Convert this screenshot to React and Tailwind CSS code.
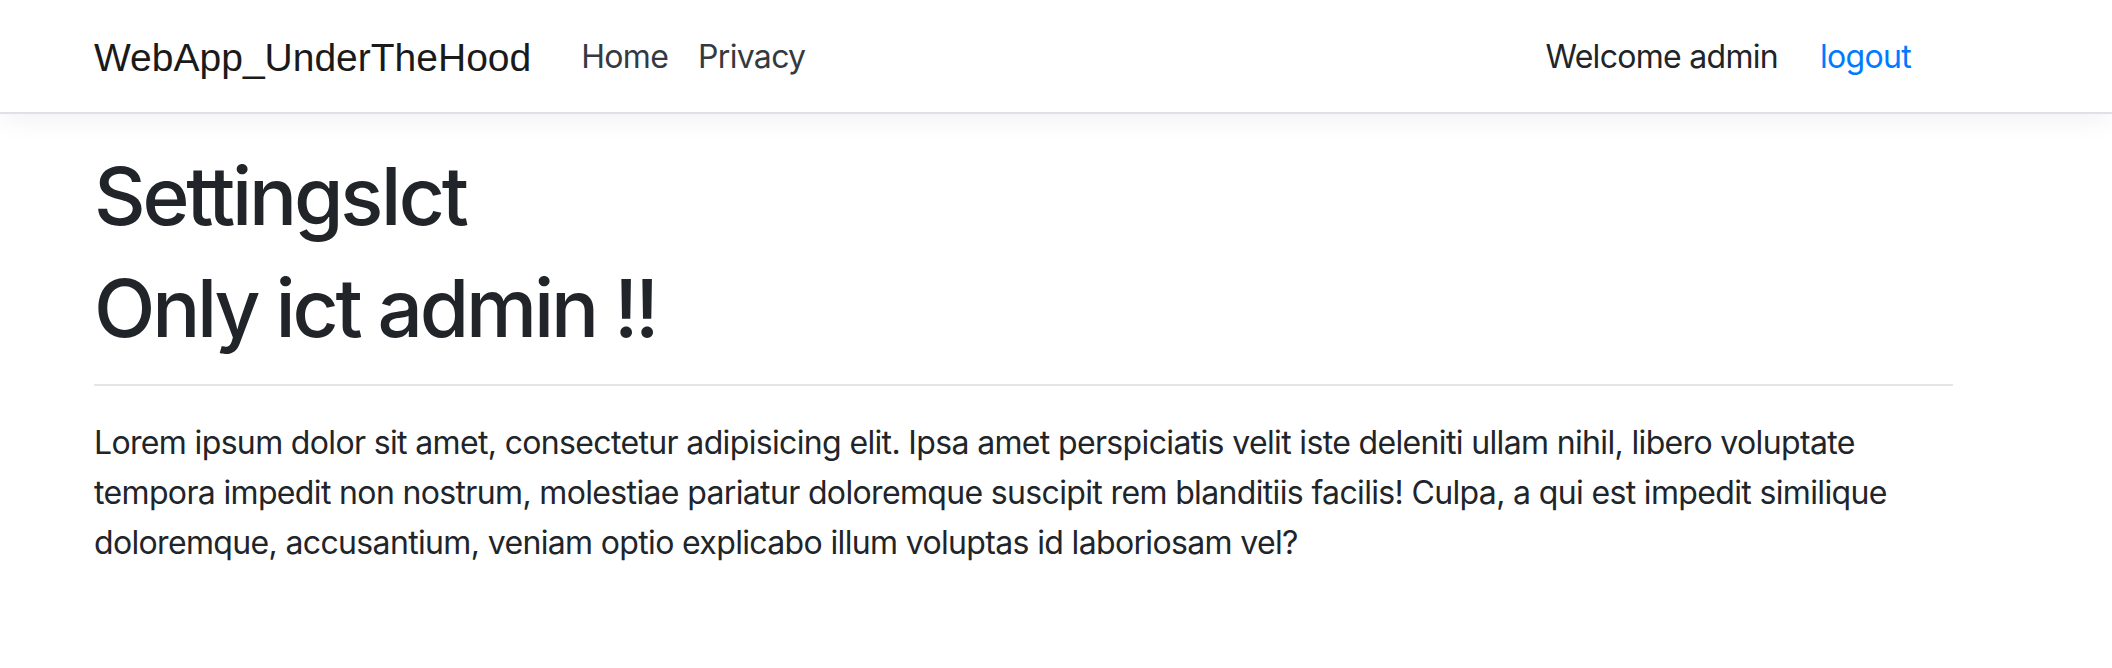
import React from 'react'

const App = () => {
  return (
    <div className="min-h-[668px] bg-white font-['Inter',sans-serif] text-[#212529]">
      <header className="h-[114px] bg-white border-b-2 border-[#dee2e6] shadow-[0_8px_24px_rgba(0,0,0,0.05)]">
        <nav className="flex items-center h-full pl-[94px] pt-[2px] w-[1911px]">
          <a className="font-['Liberation_Sans',Arial,sans-serif] text-[39px] text-[#1a1a1a] leading-none">
            WebApp_UnderTheHood
          </a>
          <ul className="flex items-center ml-[50px] gap-[30px] text-[32px] tracking-[-0.7px] text-[#343a40]">
            <li><a>Home</a></li>
            <li><a>Privacy</a></li>
          </ul>
          <ul className="flex items-center ml-auto gap-[42px] text-[32px] tracking-[-0.7px]">
            <li className="text-[#212529]">Welcome admin</li>
            <li><a className="text-[#007bff]">logout</a></li>
          </ul>
        </nav>
      </header>

      <main className="pl-[94px] pt-[34px] w-[1953px]">
        <h1 className="text-[80px] leading-[96px] font-medium tracking-[-0.04em] mb-[16px]">SettingsIct</h1>
        <h1 className="text-[80px] leading-[96px] font-medium tracking-[-0.04em] mb-[16px]">Only ict admin !!</h1>
        <hr className="mt-[28px] mb-[32px] border-t-2 border-[#e5e5e5]" />
        <p className="text-[32px] leading-[50px] tracking-[-0.65px]">
          Lorem ipsum dolor sit amet, consectetur adipisicing elit. Ipsa amet perspiciatis velit iste deleniti ullam nihil, libero voluptate tempora impedit non nostrum, molestiae pariatur doloremque suscipit rem blanditiis facilis! Culpa, a qui est impedit similique doloremque, accusantium, veniam optio explicabo illum voluptas id laboriosam vel?
        </p>
      </main>
    </div>
  )
}

export default App
